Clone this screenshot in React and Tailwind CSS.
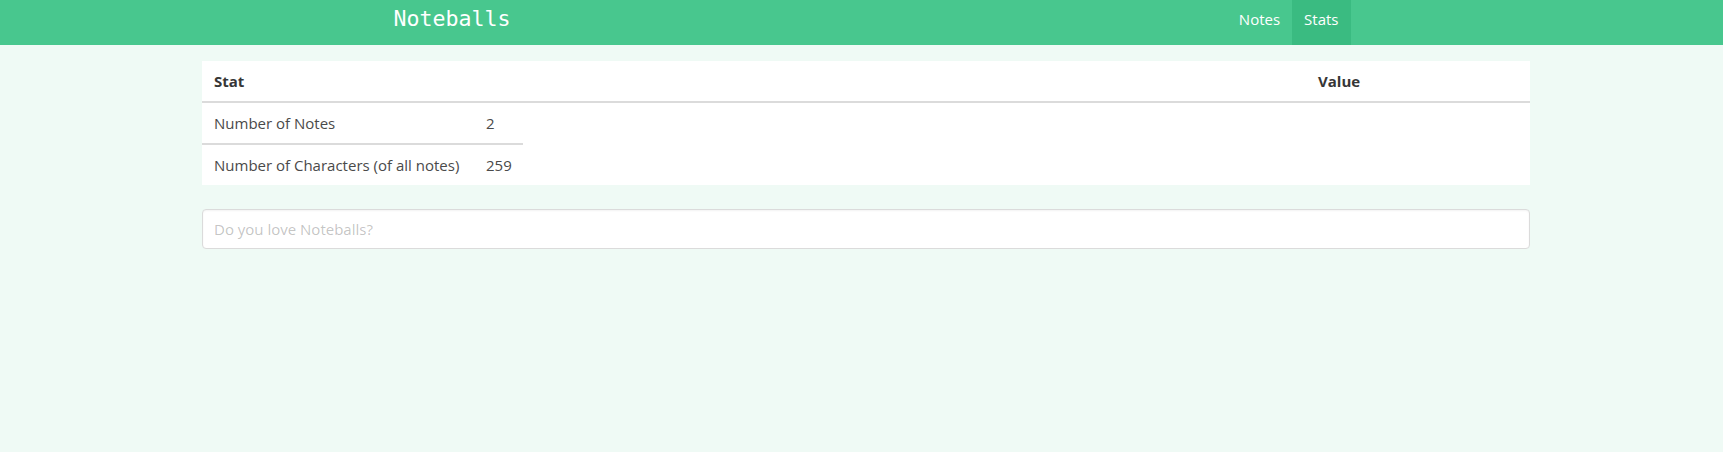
import React from "react";

const sans = { fontFamily: '"Open Sans", "Noto Sans", sans-serif' };

const rows = [
  { stat: "Number of Notes", value: "2" },
  { stat: "Number of Characters (of all notes)", value: "259" },
];

const App = () => {
  return (
    <div className="min-h-screen bg-[#effaf5] text-[15px]" style={sans}>
      <nav className="h-[45px] bg-[#48c78e] pl-[9px]">
        <div className="mx-auto flex h-full w-[969px] items-stretch justify-between">
          <div className="flex items-start px-3 pt-[4px]">
            <span className="font-['DejaVu_Sans_Mono',monospace] text-[21.6px] leading-[30px] text-white">
              Noteballs
            </span>
          </div>
          <div className="flex items-stretch">
            <a className="flex items-start px-3 pt-[7px] leading-6 text-white">Notes</a>
            <a className="flex items-start bg-[#3abb81] px-3 pt-[7px] leading-6 text-white">
              Stats
            </a>
          </div>
        </div>
      </nav>

      <main className="pl-[9px] pt-4">
        <div className="mx-auto w-[1328px]">
          <div className="bg-white">
            <div className="flex border-b-2 border-[#dbdbdb] font-bold text-[#363636]">
              <div className="flex-1 px-3 py-2 leading-6">Stat</div>
              <div className="w-[224px] px-3 py-2 leading-6">Value</div>
            </div>
            {rows.map((row, i) => (
              <div
                key={row.stat}
                className={`flex w-[321px] text-[#4a4a4a] ${
                  i < rows.length - 1 ? "border-b-2 border-[#dbdbdb]" : ""
                }`}
              >
                <div className="w-[272px] px-3 py-2 leading-6">{row.stat}</div>
                <div className="w-[49px] px-3 py-2 leading-6">{row.value}</div>
              </div>
            ))}
          </div>

          <input
            type="text"
            placeholder="Do you love Noteballs?"
            className="mt-6 block h-10 w-full rounded-[4px] border border-[#dbdbdb] bg-white px-[11px] text-[15px] text-[#363636] shadow-[inset_0_1px_2px_rgba(10,10,10,0.05)] outline-none placeholder:text-[rgba(54,54,54,0.3)]"
            style={sans}
          />
        </div>
      </main>
    </div>
  );
};

export default App;
